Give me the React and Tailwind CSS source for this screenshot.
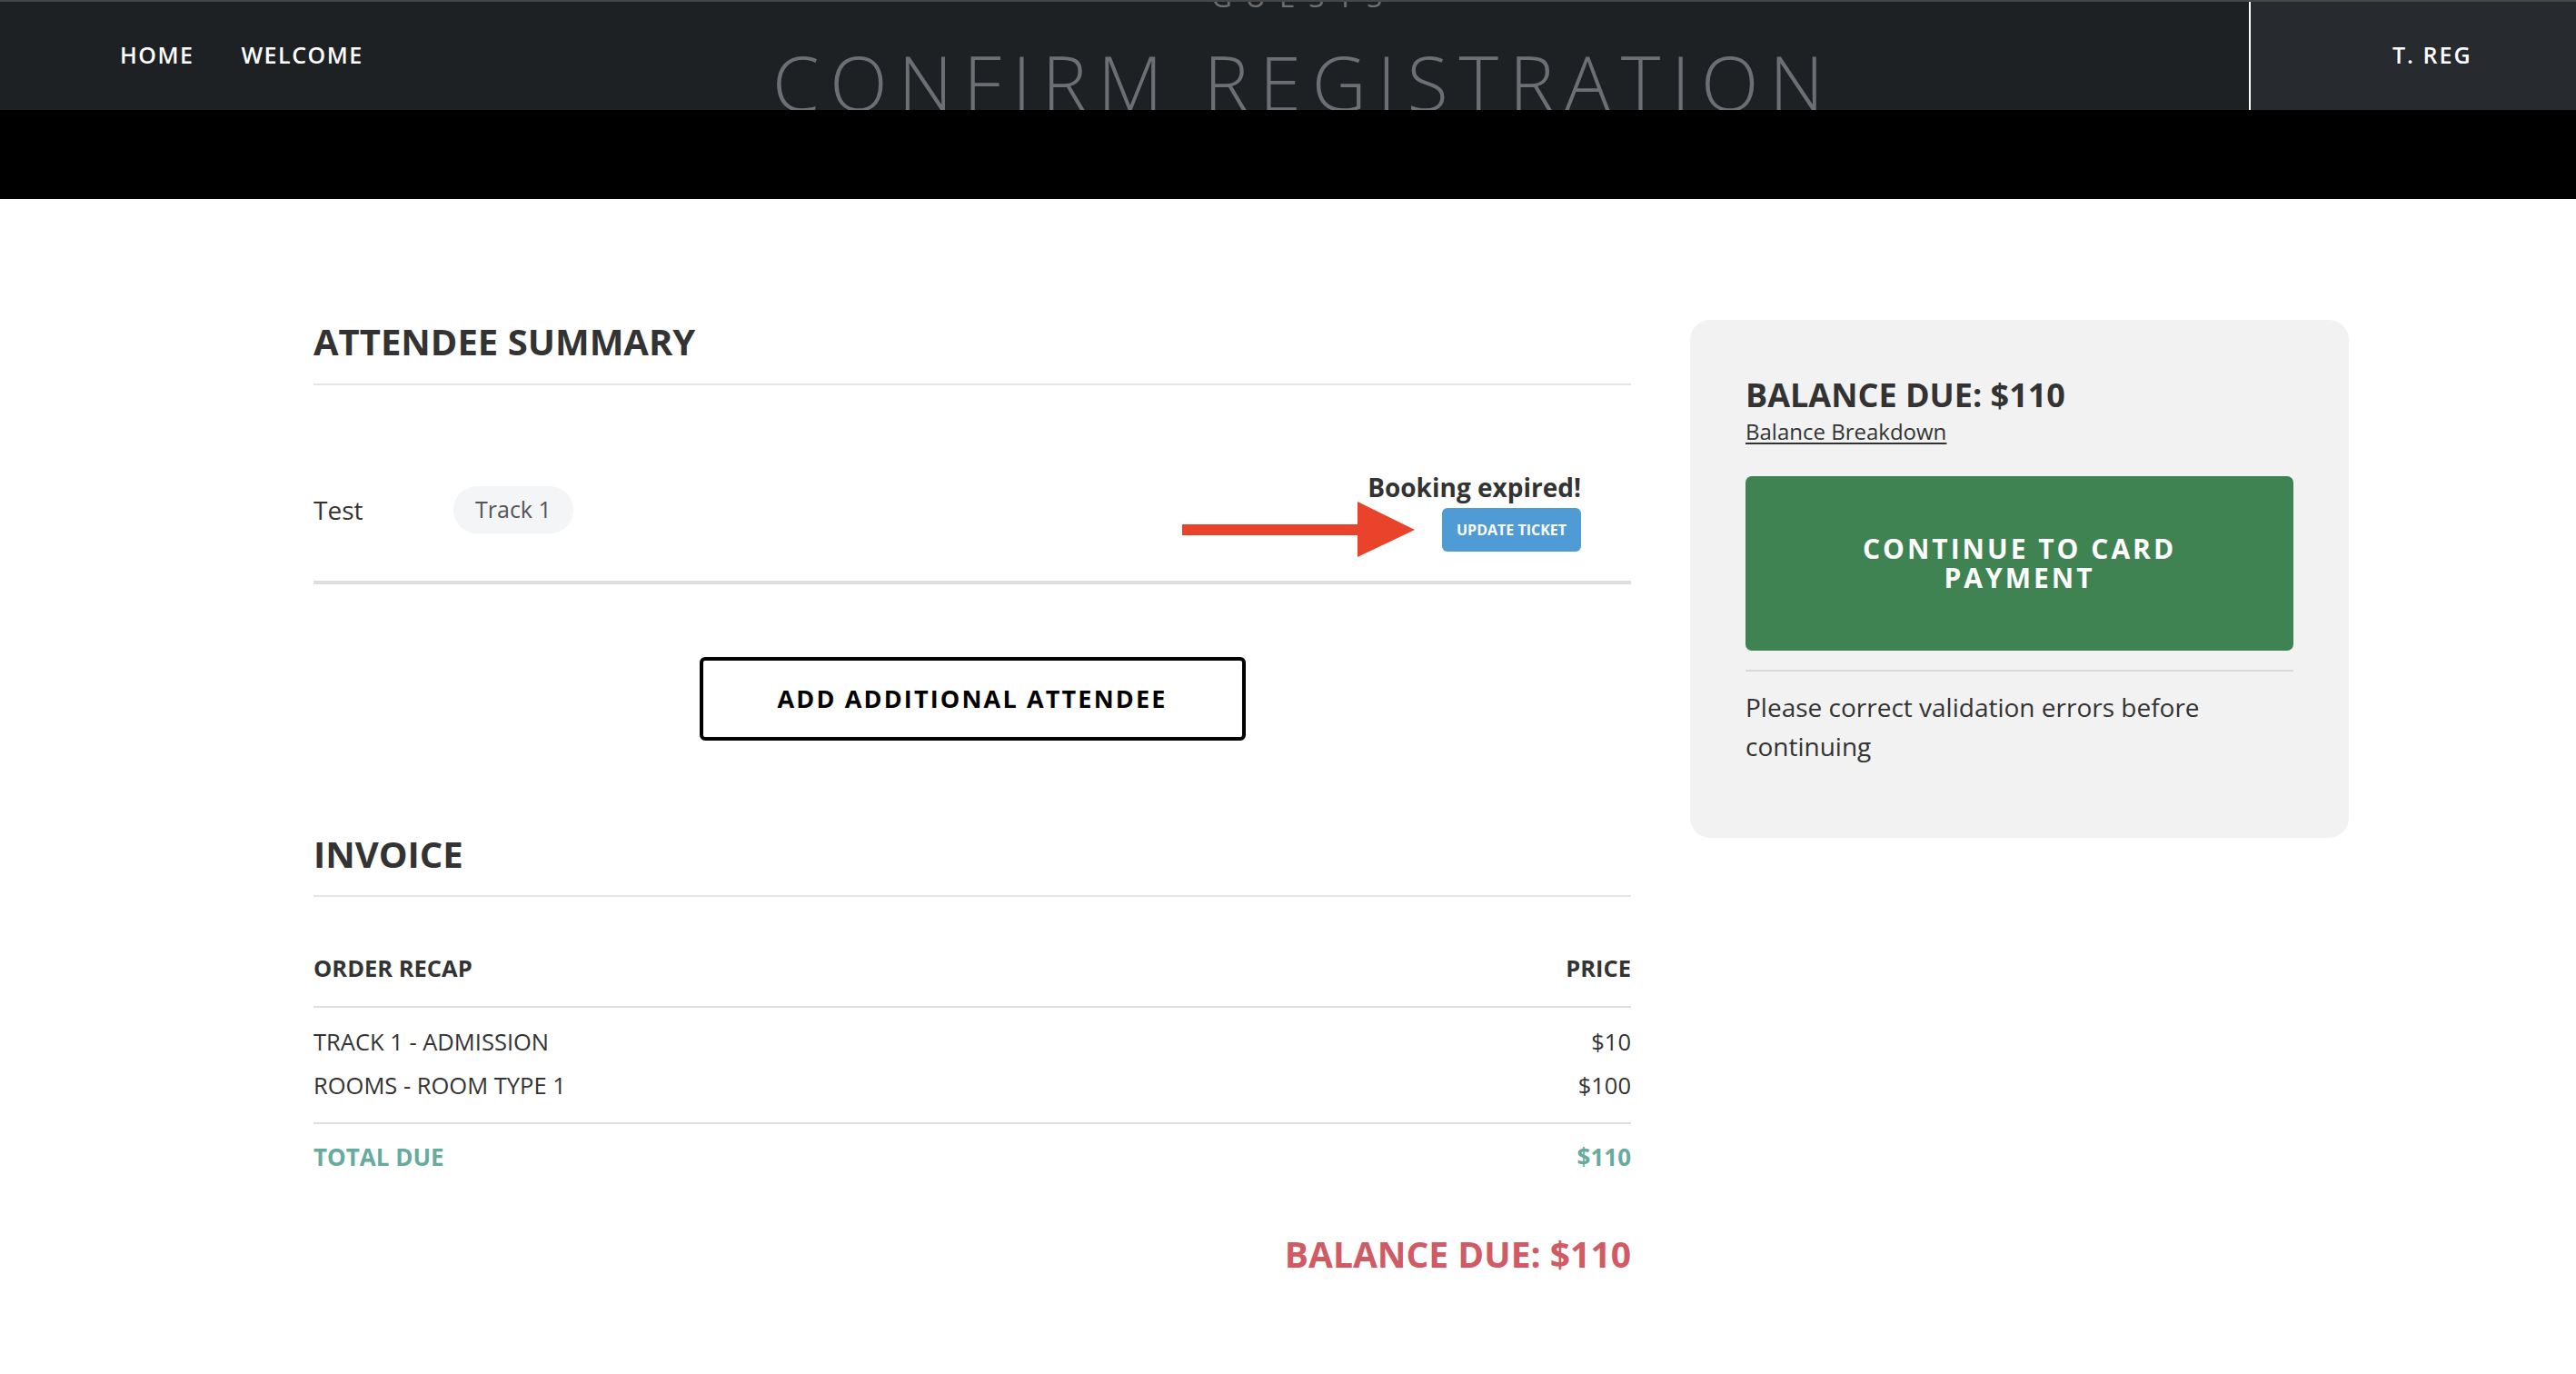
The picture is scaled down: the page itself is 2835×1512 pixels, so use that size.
export default function App() {
  return (
    <div className="h-[1512px] w-full overflow-hidden bg-white font-['Open_Sans',sans-serif] text-[#333]">
      <header className="grid h-[121px] grid-cols-[1fr_auto_1fr] overflow-hidden border-t-2 border-[#464646] bg-[#1e2124]">
        <nav className="flex items-start gap-[52px] pl-[132px] pt-[46px] text-[25px] font-semibold leading-none tracking-[0.06em] text-white">
          <a>HOME</a>
          <a>WELCOME</a>
        </nav>
        <div className="-mt-[21px] flex flex-col items-center pl-[34px]">
          <div className="text-[31px] leading-[30px] tracking-[0.48em] text-[#6c7074]">GUESTS</div>
          <h1 className="mt-[37px] whitespace-nowrap text-[83px] font-light leading-none tracking-[0.143em] text-[#6c7074]">
            CONFIRM REGISTRATION
          </h1>
        </div>
        <div className="flex justify-end">
          <div className="h-[121px] w-[360px] border-l-2 border-white bg-[#272a2f] pl-[156px] pt-[46px] text-[25px] font-semibold leading-none tracking-[0.08em] text-white">
            T. REG
          </div>
        </div>
      </header>
      <div className="h-[98px] bg-black" />

      <main className="flex items-start gap-[65px] pl-[345px] pt-[133px]">
        <section className="w-[1450px] pt-[4px]">
          <h2 className="border-b-2 border-[#e5e5e5] pb-[26px] text-[40px] font-bold leading-none">ATTENDEE SUMMARY</h2>

          <div className="flex items-end justify-between border-b-4 border-[#dedede] pb-[26px] pr-[55px] pt-[98px]">
            <div className="mb-[26px] flex items-center">
              <span className="w-[154px] text-[28px] leading-none">Test</span>
              <span className="flex h-[52px] items-center rounded-[26px] bg-[#f4f5f7] px-[24px] text-[25px] text-[#555]">
                Track 1
              </span>
            </div>
            <div className="flex flex-col items-end">
              <p className="text-[28px] font-bold leading-[29px]">Booking expired!</p>
              <div className="mt-[1px] flex items-center gap-[30px]">
                <svg width="256" height="61" viewBox="0 0 256 61">
                  <rect x="0" y="25" width="196" height="12" fill="#e9432b" />
                  <polygon points="193,0 256,31 193,61" fill="#e9432b" />
                </svg>
                <button className="h-[48px] w-[153px] rounded-[6px] bg-[#4f9bd6] text-[16px] font-bold text-white">
                  UPDATE TICKET
                </button>
              </div>
            </div>
          </div>

          <div className="flex justify-center pt-[80px]">
            <button className="h-[92px] w-[601px] rounded-[6px] border-4 border-black text-[27px] font-bold tracking-[0.08em] text-black">
              ADD ADDITIONAL ATTENDEE
            </button>
          </div>

          <h2 className="mt-[105px] border-b-2 border-[#e5e5e5] pb-[25px] text-[40px] font-bold leading-none">INVOICE</h2>

          <div className="flex justify-between border-b-2 border-[#e0e0e0] pb-[28px] pt-[66px] text-[25.5px] font-bold leading-none">
            <span>ORDER RECAP</span>
            <span>PRICE</span>
          </div>
          <div className="flex flex-col gap-[23px] border-b-2 border-[#e0e0e0] pb-[27px] pt-[25px] text-[25.5px] leading-none">
            <div className="flex justify-between">
              <span>TRACK 1 - ADMISSION</span>
              <span>$10</span>
            </div>
            <div className="flex justify-between">
              <span>ROOMS - ROOM TYPE 1</span>
              <span>$100</span>
            </div>
          </div>
          <div className="flex justify-between pt-[23px] text-[26px] font-bold leading-none text-[#67ab9f]">
            <span>TOTAL DUE</span>
            <span>$110</span>
          </div>
          <p className="mt-[74px] text-right text-[39px] font-bold leading-none text-[#d05b65]">BALANCE DUE: $110</p>
        </section>

        <aside className="w-[725px] rounded-[22px] bg-[#f2f2f2] px-[61px] pb-[79px] pt-[65px]">
          <h3 className="text-[36px] font-bold leading-none">BALANCE DUE: $110</h3>
          <a className="mt-[10px] block text-[24px] leading-none underline underline-offset-[3px]">Balance Breakdown</a>
          <button className="mt-[37px] flex h-[192px] w-full items-center justify-center rounded-[7px] bg-[#3f8352] text-[30px] font-bold leading-[32px] tracking-[0.1em] text-white">
            <span>
              CONTINUE TO CARD
              <br />
              PAYMENT
            </span>
          </button>
          <div className="mt-[21px] h-[2px] bg-[#d9d9d9]" />
          <p className="mt-[18px] text-[28px] leading-[43px]">Please correct validation errors before continuing</p>
        </aside>
      </main>
    </div>
  );
}
